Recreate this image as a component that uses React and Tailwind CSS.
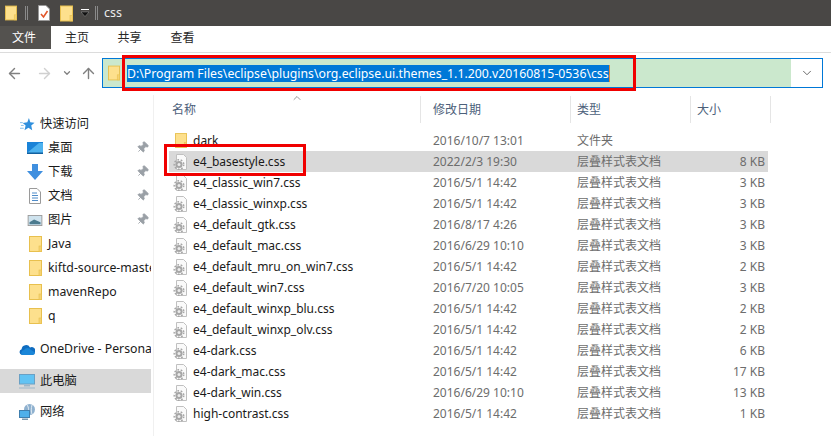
import React from "react";
import { ArrowLeft, ArrowRight, ArrowUp, ChevronDown, ChevronUp, Pin } from "lucide-react";

const files = [
  { name: "e4_basestyle.css", date: "2022/2/3 19:30", size: "8 KB", selected: true },
  { name: "e4_classic_win7.css", date: "2016/5/1 14:42", size: "3 KB" },
  { name: "e4_classic_winxp.css", date: "2016/5/1 14:42", size: "3 KB" },
  { name: "e4_default_gtk.css", date: "2016/8/17 4:26", size: "3 KB" },
  { name: "e4_default_mac.css", date: "2016/6/29 10:10", size: "3 KB" },
  { name: "e4_default_mru_on_win7.css", date: "2016/5/1 14:42", size: "2 KB" },
  { name: "e4_default_win7.css", date: "2016/7/20 10:05", size: "3 KB" },
  { name: "e4_default_winxp_blu.css", date: "2016/5/1 14:42", size: "2 KB" },
  { name: "e4_default_winxp_olv.css", date: "2016/5/1 14:42", size: "2 KB" },
  { name: "e4-dark.css", date: "2016/5/1 14:42", size: "6 KB" },
  { name: "e4-dark_mac.css", date: "2016/5/1 14:42", size: "17 KB" },
  { name: "e4-dark_win.css", date: "2016/6/29 10:10", size: "13 KB" },
  { name: "high-contrast.css", date: "2016/5/1 14:42", size: "1 KB" },
];

function Folder({ className = "w-[13px] h-[16px]" }) {
  return (
    <svg viewBox="0 0 13 16" className={className}>
      <rect x="0.5" y="0.5" width="12" height="15" fill="#fde08d" stroke="#e8c04e" />
      <rect x="10" y="10" width="2.5" height="5.5" fill="#f5d271" stroke="#e8c04e" strokeWidth="0.6" />
    </svg>
  );
}

function CssFile() {
  return (
    <svg viewBox="0 0 16 16" className="w-[16px] h-[16px]">
      <path d="M3.5 0.5H10.5L13.5 3.5V15.5H3.5Z" fill="#fafafa" stroke="#c0c0c0" />
      <circle cx="6" cy="10.5" r="3.6" fill="#a6a6a6" />
      <circle cx="6" cy="10.5" r="4.8" fill="none" stroke="#a6a6a6" strokeWidth="1.4" strokeDasharray="1.7 1.7" />
      <circle cx="6" cy="10.5" r="1.5" fill="#ececec" />
    </svg>
  );
}

function NavIcon({ type }) {
  if (type === "star") {
    return (
      <svg viewBox="0 0 16 16" className="w-[15px] h-[15px]">
        <path d="M9.5 1L11 5.6L15.5 6L12 9L13 14L9 11.4L4.8 14L6 9L3 6.4L7.8 5.6Z" fill="#2f8fdd" />
        <path d="M0 6H3M1 9H4M0 12H4" stroke="#7fbdea" strokeWidth="1" />
      </svg>
    );
  }
  if (type === "desktop") {
    return (
      <svg viewBox="0 0 16 12" className="w-[16px] h-[12px]">
        <rect width="16" height="12" fill="#1a83d8" />
        <path d="M0 11L12 1H16V11Z" fill="#4db2ef" />
        <rect y="10.5" width="16" height="1.5" fill="#12609f" />
      </svg>
    );
  }
  if (type === "down") {
    return (
      <svg viewBox="0 0 16 16" className="w-[16px] h-[16px]">
        <path d="M5 0H11V7H16L8 16L0 7H5Z" fill="#3f8fdf" />
      </svg>
    );
  }
  if (type === "doc") {
    return (
      <svg viewBox="0 0 12 16" className="w-[12px] h-[16px]">
        <path d="M0.5 0.5H8L11.5 4V15.5H0.5Z" fill="#fff" stroke="#9a9a9a" />
        <path d="M3 5H8M3 7.5H9M3 10H9M3 12.5H9" stroke="#4f8cc9" strokeWidth="1" />
      </svg>
    );
  }
  if (type === "pic") {
    return (
      <svg viewBox="0 0 16 12" className="w-[16px] h-[11px]">
        <rect x="0.5" y="0.5" width="15" height="11" fill="#cfe3ee" stroke="#9a9a9a" />
        <path d="M2 8L7 5L14 8V10H2Z" fill="#4b7a8e" />
      </svg>
    );
  }
  if (type === "cloud") {
    return (
      <svg viewBox="0 0 16 11" className="w-[16px] h-[11px]">
        <path d="M3 11A3 3 0 0 1 2.6 5.2A4.5 4.5 0 0 1 11 3.4A3.6 3.6 0 0 1 16 8A3 3 0 0 1 13.5 11Z" fill="#0f6cc0" />
        <path d="M3 11A3 3 0 0 1 5 6A4 4 0 0 1 12 6L16 8.5A3 3 0 0 1 13.5 11Z" fill="#1a86d8" />
      </svg>
    );
  }
  if (type === "pc") {
    return (
      <svg viewBox="0 0 16 15" className="w-[16px] h-[15px]">
        <rect x="0.5" y="0.5" width="15" height="9.5" fill="#62c3f3" stroke="#6aa0c4" />
        <rect x="5" y="11" width="6" height="1.5" fill="#9db7c9" />
        <rect y="13.5" width="16" height="1" fill="#9db7c9" />
      </svg>
    );
  }
  return (
    <svg viewBox="0 0 16 16" className="w-[16px] h-[16px]">
      <circle cx="10.5" cy="5.5" r="5.5" fill="#8fb1cf" />
      <path d="M8 1C10 3 10 8 8 10M13 1C12 4 12 8 13 10" stroke="#e4edf4" fill="none" />
      <rect x="0.5" y="6.5" width="10" height="7" fill="#4fb0ea" stroke="#3f7fae" />
      <rect x="3" y="14.5" width="6" height="1.5" fill="#7d99ad" />
    </svg>
  );
}

function NavItem({ icon, label, pinned, indent, active, className = "" }) {
  return (
    <div className={`relative flex h-6 w-[151px] items-center overflow-hidden text-[12.27px] ${active ? "bg-[#d9d9d9]" : ""} ${indent ? "pl-[27px]" : "pl-[19px]"} ${className}`}>
      <span className="flex w-[16px] shrink-0 justify-center">{icon}</span>
      <span className="ml-[5px] whitespace-nowrap text-[#1a1a1a]">{label}</span>
      {pinned && (
        <Pin className="absolute right-[2px] top-[5px] h-[13px] w-[13px] rotate-45 text-[#9aa0a6]" fill="#9aa0a6" strokeWidth={1.5} />
      )}
    </div>
  );
}

function ColHead({ label, className }) {
  return (
    <div className={`flex h-[27px] items-center border-r border-[#e5e5e5] text-[#4c607a] ${className}`}>
      {label}
    </div>
  );
}

function FileRow({ icon, name, date, type, size, selected }) {
  return (
    <div className={`flex h-[21px] w-[599px] items-center ${selected ? "bg-[#d9d9d9]" : ""}`}>
      <span className="flex w-[24px] shrink-0 justify-center">{icon}</span>
      <span className="w-[240px] shrink-0 whitespace-nowrap text-[#1a1a1a]">{name}</span>
      <span className="w-[144px] shrink-0 whitespace-nowrap text-[#6d6d6d]">{date}</span>
      <span className="w-[130px] shrink-0 whitespace-nowrap text-[#6d6d6d]">{type}</span>
      <span className="w-[58px] shrink-0 whitespace-nowrap text-right text-[#6d6d6d]">{size}</span>
    </div>
  );
}

export default function App() {
  return (
    <div className="relative h-[436px] w-[831px] overflow-hidden bg-white text-[12px] font-['Noto_Sans','Noto_Sans_CJK_SC',sans-serif]">
      {/* title bar */}
      <div className="flex h-[26px] items-center bg-[#494745] pl-[5px] text-[#ececec]">
        <Folder className="h-[16px] w-[12px]" />
        <span className="ml-[8px] h-[14px] w-[3px] border-x border-[#8a8a8a]" />
        <svg viewBox="0 0 12 16" className="ml-[10px] h-[16px] w-[12px]">
          <path d="M0.5 0.5H8L11.5 4V15.5H0.5Z" fill="#fff" stroke="#999" />
          <path d="M3 9L5.5 12L9.5 6" stroke="#e2572b" strokeWidth="1.6" fill="none" />
        </svg>
        <Folder className="ml-[10px] h-[17px] w-[13px]" />
        <svg viewBox="0 0 8 8" className="ml-[8px] h-[8px] w-[8px]">
          <rect y="0" width="8" height="1" fill="#fff" />
          <path d="M0 3H8L4 7.5Z" fill="#111" stroke="#ddd" strokeWidth="0.3" />
        </svg>
        <span className="ml-[6px] h-[14px] w-[3px] border-x border-[#8a8a8a]" />
        <span className="ml-[6px] text-[12.5px]">css</span>
      </div>

      {/* ribbon tabs */}
      <div className="flex h-[27px] items-start border-b border-[#dcdcdc] text-[#262626]">
        <div className="flex h-[23px] w-[51px] items-center justify-center bg-[#54524f] pr-[3px] text-white">文件</div>
        <div className="flex h-[23px] w-[52px] items-center justify-center">主页</div>
        <div className="flex h-[23px] w-[53px] items-center justify-center">共享</div>
        <div className="flex h-[23px] w-[53px] items-center justify-center">查看</div>
      </div>

      {/* address row */}
      <div className="flex h-[42px] items-start pt-[5px]">
        <div className="flex h-[30px] w-[102px] items-center">
          <ArrowLeft className="ml-[6px] h-[17px] w-[17px] text-[#808080]" strokeWidth={2} />
          <ArrowRight className="ml-[13px] h-[17px] w-[17px] text-[#d0d0d0]" strokeWidth={2} />
          <ChevronDown className="ml-[9px] h-[10px] w-[10px] text-[#808080]" strokeWidth={3} />
          <ArrowUp className="ml-[8px] h-[17px] w-[17px] text-[#808080]" strokeWidth={2} />
        </div>
        <div className="flex h-[30px] w-[721px] items-stretch border border-[#0078d7]">
          <div className="flex w-[688px] items-center bg-[#cbe8cd] pl-[5px]">
            <Folder className="h-[16px] w-[12px]" />
            <span className="ml-[7px] whitespace-nowrap border-r border-[#e08a3a] bg-[#0078d7] text-[12.27px] leading-[17px] text-white">
              D:\Program Files\eclipse\plugins\org.eclipse.ui.themes_1.1.200.v20160815-0536\css
            </span>
          </div>
          <div className="flex flex-1 items-center justify-center">
            <ChevronDown className="h-[14px] w-[14px] text-[#555]" strokeWidth={1.5} />
          </div>
        </div>
      </div>

      {/* main */}
      <div className="flex h-[341px]">
        <aside className="w-[154px] shrink-0 border-r border-[#f0f0f0] pt-[17px]">
          <NavItem icon={<NavIcon type="star" />} label="快速访问" />
          <NavItem indent pinned icon={<NavIcon type="desktop" />} label="桌面" />
          <NavItem indent pinned icon={<NavIcon type="down" />} label="下载" />
          <NavItem indent pinned icon={<NavIcon type="doc" />} label="文档" />
          <NavItem indent pinned icon={<NavIcon type="pic" />} label="图片" />
          <NavItem indent icon={<Folder />} label="Java" />
          <NavItem indent icon={<Folder />} label="kiftd-source-master" />
          <NavItem indent icon={<Folder />} label="mavenRepo" />
          <NavItem indent icon={<Folder />} label="q" />
          <NavItem className="mt-[9px]" icon={<NavIcon type="cloud" />} label="OneDrive - Personal" />
          <NavItem className="mt-[8px]" active icon={<NavIcon type="pc" />} label="此电脑" />
          <NavItem className="mt-[7px]" icon={<NavIcon type="net" />} label="网络" />
        </aside>

        <section className="relative flex-1 pl-[15px]">
          <ChevronUp className="absolute left-[137px] top-[-3px] h-[12px] w-[12px] text-[#777]" strokeWidth={1.5} />
          <div className="mt-[1px] flex">
            <ColHead label="名称" className="w-[252px] pl-[3px]" />
            <ColHead label="修改日期" className="w-[150px] pl-[12px]" />
            <ColHead label="类型" className="w-[120px] pl-[6px]" />
            <ColHead label="大小" className="w-[80px] pl-[6px]" />
          </div>
          <div className="mt-[7px]">
            <FileRow icon={<Folder className="h-[15px] w-[12px]" />} name="dark" date="2016/10/7 13:01" type="文件夹" size="" />
            {files.map((f) => (
              <FileRow key={f.name} icon={<CssFile />} name={f.name} date={f.date} type="层叠样式表文档" size={f.size} selected={f.selected} />
            ))}
          </div>
        </section>
      </div>

      {/* red annotation boxes */}
      <div className="absolute left-[122px] top-[55px] h-[36px] w-[514px] border-[3px] border-[#f00000]" />
      <div className="absolute left-[164px] top-[144px] h-[32px] w-[142px] border-[3px] border-[#f00000]" />
    </div>
  );
}
